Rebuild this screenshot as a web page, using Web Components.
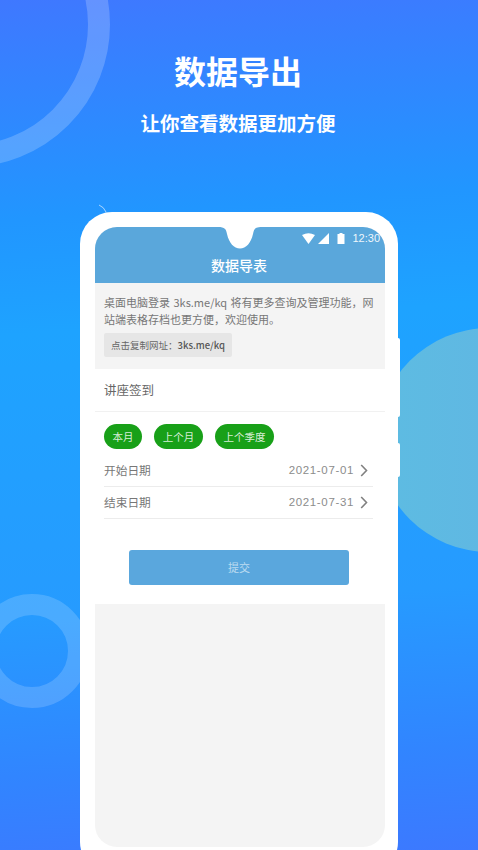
<!DOCTYPE html>
<html lang="zh">
<head>
<meta charset="utf-8">
<title>数据导出</title>
<style>
  html, body { margin: 0; padding: 0; }
  body { font-family: "Noto Sans CJK SC", "Noto Sans", sans-serif; }
</style>
</head>
<body>
<promo-page>
  <promo-heading title="数据导出" subtitle="让你查看数据更加方便"></promo-heading>
  <phone-frame>
    <app-header title="数据导表"></app-header>
    <notice-card url="3ks.me/kq"></notice-card>
    <form-panel title="讲座签到">
      <range-chip slot="chips">本月</range-chip>
      <range-chip slot="chips">上个月</range-chip>
      <range-chip slot="chips">上个季度</range-chip>
      <date-row slot="rows" label="开始日期" value="2021-07-01"></date-row>
      <date-row slot="rows" label="结束日期" value="2021-07-31"></date-row>
      <submit-button slot="action">提交</submit-button>
    </form-panel>
  </phone-frame>
</promo-page>

<script>
/**
 * Background with the decorative circles
 */
class PromoPage extends HTMLElement {
  constructor() {
    super();
    this.attachShadow({ mode: 'open' });
    this.shadowRoot.innerHTML = `
      <style>
        :host {
          display: flex;
          flex-direction: column;
          align-items: center;
          position: relative;
          width: 478px;
          height: 850px;
          overflow: hidden;
          background: linear-gradient(176deg, #3f78ff 0%, #2196ff 25%, #1ea3ff 38%, #269bff 70%, #3185ff 88%, #3c79ff 100%);
        }
        .deco { position: absolute; border-radius: 50%; box-sizing: border-box; }
        .ring-top {
          left: -175px;
          top: -118px;
          width: 285px;
          height: 285px;
          border: 22px solid rgba(255, 255, 255, 0.2);
        }
        .ring-bottom {
          left: -25px;
          top: 594px;
          width: 114px;
          height: 114px;
          border: 21px solid rgba(255, 255, 255, 0.17);
        }
        .disc {
          left: 377px;
          top: 328px;
          width: 224px;
          height: 224px;
          background: linear-gradient(90deg, #5dbce2, #62b3e3);
        }
        ::slotted(*) { position: relative; }
      </style>
      <div class="deco ring-top"></div>
      <div class="deco ring-bottom"></div>
      <div class="deco disc"></div>
      <slot></slot>
    `;
  }
}

class PromoHeading extends HTMLElement {
  constructor() {
    super();
    this.attachShadow({ mode: 'open' });
    this.shadowRoot.innerHTML = `
      <style>
        :host {
          display: flex;
          flex-direction: column;
          align-items: center;
          flex: none;
          height: 212px;
          box-sizing: border-box;
          padding: 47px 2px 0 0;
          color: #fff;
        }
        h1 { margin: 0; font-size: 32px; line-height: 46px; font-weight: 700; }
        p { margin: 15px 0 0; font-size: 19.5px; line-height: 30px; font-weight: 700; }
      </style>
      <h1>${this.getAttribute('title')}</h1>
      <p>${this.getAttribute('subtitle')}</p>
    `;
  }
}

/**
 * White phone body, runs past the bottom of the page
 */
class PhoneFrame extends HTMLElement {
  constructor() {
    super();
    this.attachShadow({ mode: 'open' });
    this.shadowRoot.innerHTML = `
      <style>
        :host {
          display: block;
          position: relative;
          flex: none;
          width: 318px;
          height: 662px;
          box-sizing: border-box;
          padding: 15px 13px 15px 15px;
          background: #fff;
          border-radius: 32px;
        }
        .screen {
          display: flex;
          flex-direction: column;
          height: 620px;
          background: #f4f4f4;
          border-radius: 22px;
          overflow: hidden;
        }
        .key {
          position: absolute;
          left: 318px;
          width: 2px;
          background: #fff;
          border-radius: 0 2px 2px 0;
        }
        .key-a { top: 126px; height: 79px; }
        .key-b { top: 231px; height: 34px; }
        .flick { position: absolute; left: 18px; top: -8px; }
      </style>
      <svg class="flick" width="10" height="10" viewBox="0 0 10 10">
        <path d="M1 1 Q6 3 8 8" fill="none" stroke="rgba(255,255,255,.6)" stroke-width="1"/>
      </svg>
      <div class="screen"><slot></slot></div>
      <span class="key key-a"></span>
      <span class="key key-b"></span>
    `;
  }
}

class AppHeader extends HTMLElement {
  constructor() {
    super();
    this.attachShadow({ mode: 'open' });
    this.shadowRoot.innerHTML = `
      <style>
        :host {
          display: flex;
          flex-direction: column;
          position: relative;
          height: 56px;
          flex: none;
          background: #5aa7db;
          color: #fff;
        }
        .notch { position: absolute; left: 123px; top: 0; }
        .status {
          display: flex;
          align-items: center;
          justify-content: flex-end;
          height: 23px;
          padding-right: 5px;
          font: 400 11px/23px "Liberation Sans", sans-serif;
          color: rgba(255, 255, 255, 0.92);
        }
        .status svg { display: block; }
        .wifi { margin-right: 3px; }
        .signal { margin-right: 8px; }
        .battery { margin-right: 7px; }
        .title {
          padding-right: 2px;
          text-align: center;
          font-size: 14px;
          font-weight: 500;
          line-height: 20px;
          margin-top: 5px;
        }
      </style>
      <svg class="notch" width="44" height="22" viewBox="0 0 44 22">
        <path d="M0 0 C7 0 8 2 9 7 C11 16 16 21.500 22 21.500 C28 21.500 33 16 35 7 C36 2 37 0 44 0Z" fill="#fff"/>
      </svg>
      <div class="status">
        <svg class="wifi" width="13" height="11" viewBox="0 0 13 11"><path d="M0 2 Q6.500 -1.500 13 2 L6.500 11Z" fill="#fff"/></svg>
        <svg class="signal" width="11" height="11" viewBox="0 0 11 11"><path d="M11 0 V11 H0Z" fill="#fff"/></svg>
        <svg class="battery" width="8" height="11" viewBox="0 0 8 11"><path d="M2.500 0 H5.500 V1 H7.500 V11 H0.500 V1 H2.500Z" fill="#fff"/></svg>
        <span>12:30</span>
      </div>
      <div class="title">${this.getAttribute('title')}</div>
    `;
  }
}

class NoticeCard extends HTMLElement {
  constructor() {
    super();
    const url = this.getAttribute('url');
    this.attachShadow({ mode: 'open' });
    this.shadowRoot.innerHTML = `
      <style>
        :host {
          display: block;
          flex: none;
          height: 86px;
          box-sizing: border-box;
          padding: 11px 4px 0 9px;
          background: #f4f4f4;
        }
        p {
          margin: 0;
          font-size: 11px;
          line-height: 17px;
          word-spacing: 1px;
          color: #777;
        }
        .copy {
          display: inline-block;
          margin-top: 5px;
          padding: 0 7px;
          height: 24px;
          line-height: 24px;
          font-size: 9.500px;
          color: #666;
          background: #e6e6e6;
          border-radius: 2px;
        }
        b { font-weight: 500; color: #555; }
      </style>
      <p>桌面电脑登录 ${url} 将有更多查询及管理功能，网站端表格存档也更方便，欢迎使用。</p>
      <span class="copy">点击复制网址：<b>${url}</b></span>
    `;
  }
}

class FormPanel extends HTMLElement {
  constructor() {
    super();
    this.attachShadow({ mode: 'open' });
    this.shadowRoot.innerHTML = `
      <style>
        :host {
          display: block;
          flex: none;
          height: 235px;
          box-sizing: border-box;
          background: #fff;
        }
        .name {
          height: 43px;
          box-sizing: border-box;
          padding-left: 9px;
          font-size: 12.500px;
          line-height: 42px;
          color: #666;
          border-bottom: 1px solid #f1f1f1;
        }
        .chips { display: flex; gap: 12px; padding: 12px 9px 0; }
        .rows { padding: 6px 12px 0 9px; }
        .action { display: flex; justify-content: center; padding: 31px 2px 0 0; }
      </style>
      <div class="name">${this.getAttribute('title')}</div>
      <div class="chips"><slot name="chips"></slot></div>
      <div class="rows"><slot name="rows"></slot></div>
      <div class="action"><slot name="action"></slot></div>
    `;
  }
}

class RangeChip extends HTMLElement {
  constructor() {
    super();
    this.attachShadow({ mode: 'open' });
    this.shadowRoot.innerHTML = `
      <style>
        :host {
          display: block;
          height: 25px;
          padding: 0 8.600px;
          border-radius: 13px;
          background: #18a018;
          color: rgba(255, 255, 255, 0.85);
          font-size: 10.500px;
          line-height: 25px;
        }
      </style>
      <slot></slot>
    `;
  }
}

class DateRow extends HTMLElement {
  constructor() {
    super();
    this.attachShadow({ mode: 'open' });
    this.shadowRoot.innerHTML = `
      <style>
        :host {
          display: flex;
          align-items: center;
          justify-content: space-between;
          height: 32px;
          box-sizing: border-box;
          padding-bottom: 1px;
          border-bottom: 1px solid #ececec;
        }
        .label { font-size: 11.700px; color: #777; margin-bottom: 2px; }
        .value {
          display: flex;
          align-items: center;
          gap: 6px;
          font: 400 11.500px "Liberation Sans", sans-serif;
          letter-spacing: 0.65px;
          color: #8c8c8c;
        }
        svg { display: block; margin-right: 5px; }
      </style>
      <span class="label">${this.getAttribute('label')}</span>
      <span class="value">
        ${this.getAttribute('value')}
        <svg width="8" height="13" viewBox="0 0 8 13"><path d="M1.200 1 L6.500 6.500 L1.200 12" fill="none" stroke="#808080" stroke-width="1.600"/></svg>
      </span>
    `;
  }
}

class SubmitButton extends HTMLElement {
  constructor() {
    super();
    this.attachShadow({ mode: 'open' });
    this.shadowRoot.innerHTML = `
      <style>
        :host {
          display: block;
          width: 220px;
          height: 35px;
          border-radius: 3px;
          background: #5aa7dd;
          color: rgba(255, 255, 255, 0.6);
          text-align: center;
          font-size: 11px;
          line-height: 35px;
        }
      </style>
      <slot></slot>
    `;
  }
}

customElements.define('promo-page', PromoPage);
customElements.define('promo-heading', PromoHeading);
customElements.define('phone-frame', PhoneFrame);
customElements.define('app-header', AppHeader);
customElements.define('notice-card', NoticeCard);
customElements.define('form-panel', FormPanel);
customElements.define('range-chip', RangeChip);
customElements.define('date-row', DateRow);
customElements.define('submit-button', SubmitButton);
</script>
</body>
</html>
